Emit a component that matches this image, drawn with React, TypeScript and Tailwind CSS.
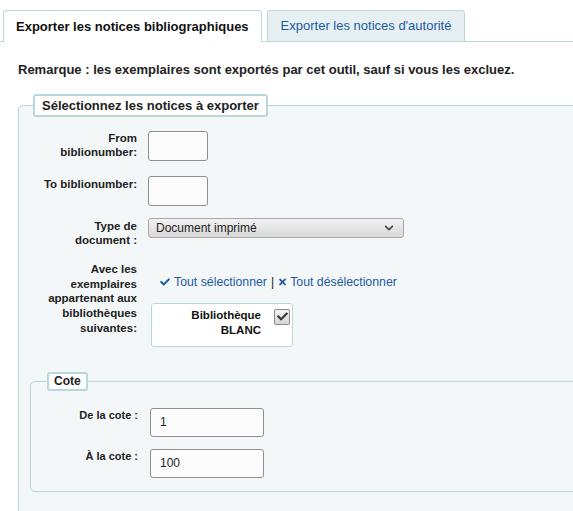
import { FaCheck, FaTimes, FaChevronDown } from 'react-icons/fa'

const labelCls =
  'w-[100px] shrink-0 text-right text-[11.5px] font-bold leading-[14.7px] text-[#222]'

const coteLabelCls =
  'w-[100px] shrink-0 text-right text-[11px] font-bold leading-[14.7px] text-[#222]'

const inputCls =
  'rounded-[3px] border border-[#8f8f8f] bg-[#fcfcfc] px-[9px] text-[12px] text-[#222] outline-none'

export default function App() {
  return (
    <div className="h-[511px] w-full overflow-hidden bg-white font-['Liberation_Sans',Arial,sans-serif]">
      {/* Tabs */}
      <div className="flex items-end border-b border-[#b9d8d9] pl-[3px] pt-[10px]">
        <div className="-mb-px flex h-[32px] items-center rounded-t-[4px] border border-b-0 border-[#b9d8d9] bg-white px-[12px] text-[13px] font-bold text-[#111]">
          Exporter les notices bibliographiques
        </div>
        <div className="ml-[5px] flex h-[31px] items-center rounded-t-[4px] border border-b-0 border-[#b9d8d9] bg-[#e6f0f2] px-[13px] text-[13px] text-[#1e5aa3]">
          Exporter les notices d'autorité
        </div>
      </div>

      <p className="ml-[18px] mt-[18px] text-[13px] font-bold text-[#222]">
        Remarque : les exemplaires sont exportés par cet outil, sauf si vous
        les excluez.
      </p>

      {/* Selection fieldset */}
      <fieldset className="ml-[18px] mt-[14px] w-[600px] rounded-[5px] border border-[#b9d8d9] bg-[#f3f7f8] pb-[40px]">
        <legend className="ml-[14px] rounded-[3px] border-2 border-[#b9d8d9] bg-white px-[7px] text-[13px] font-bold leading-[19px] text-[#222]">
          Sélectionnez les notices à exporter
        </legend>

        <div className="mt-[14px] flex items-start pl-[18px]">
          <div className={labelCls}>
            From
            <br />
            biblionumber:
          </div>
          <input
            readOnly
            className={`ml-[11px] h-[30px] w-[60px] ${inputCls}`}
          />
        </div>

        <div className="mt-[15px] flex items-start pl-[18px]">
          <div className={`${labelCls} pt-[1px]`}>To biblionumber:</div>
          <input
            readOnly
            className={`ml-[11px] h-[30px] w-[60px] ${inputCls}`}
          />
        </div>

        <div className="mt-[12px] flex items-start pl-[18px]">
          <div className={`${labelCls} pt-[1px]`}>
            Type de
            <br />
            document :
          </div>
          <div className="ml-[11px] flex h-[20px] w-[256px] items-center justify-between rounded-[3px] border border-[#a8a8a8] bg-gradient-to-b from-[#f2f2f2] to-[#d9d9d9] pl-[7px] pr-[9px] text-[12px] text-[#222]">
            <span>Document imprimé</span>
            <FaChevronDown className="h-[10px] w-[10px] text-[#444]" />
          </div>
        </div>

        <div className="mt-[14px] flex items-start pl-[18px]">
          <div className={labelCls}>
            Avec les exemplaires appartenant aux bibliothèques suivantes:
          </div>
          <div className="ml-[11px] pt-[13px]">
            <div className="ml-[12px] flex items-center text-[12.3px] leading-[15px] text-[#1e5aa3]">
              <FaCheck className="mr-[4px] h-[10px] w-[10px]" />
              <span>Tout sélectionner</span>
              <span className="mx-[4px] text-[#222]">|</span>
              <FaTimes className="mr-[3px] h-[10px] w-[9px]" />
              <span>Tout désélectionner</span>
            </div>
            <div className="ml-[3px] mt-[13px] flex h-[44px] w-[142px] items-start rounded-[3px] border border-[#b9d8d9] bg-white pt-[4px]">
              <div className="w-[109px] text-right text-[11.5px] font-bold leading-[15px] text-[#111]">
                Bibliothèque
                <br />
                BLANC
              </div>
              <div className="ml-[13px] mt-[1px] flex h-[16px] w-[16px] items-center justify-center rounded-[2px] border border-[#8a8a8a] bg-gradient-to-b from-[#f4f4f4] to-[#d6d6d6]">
                <FaCheck className="h-[11px] w-[11px] text-[#3a3a3a]" />
              </div>
            </div>
          </div>
        </div>

        {/* Cote fieldset */}
        <fieldset className="ml-[11px] mt-[25px] w-[600px] rounded-[5px] border border-[#b9d8d9] pb-[13px]">
          <legend className="ml-[16px] rounded-[3px] border-2 border-[#b9d8d9] bg-white px-[5px] text-[12px] font-bold leading-[15px] text-[#222]">
            Cote
          </legend>

          <div className="mt-[17px] flex items-start pl-[7px]">
            <div className={coteLabelCls}>De la cote :</div>
            <input
              readOnly
              defaultValue="1"
              className={`ml-[12px] h-[29px] w-[114px] ${inputCls}`}
            />
          </div>

          <div className="mt-[12px] flex items-start pl-[7px]">
            <div className={coteLabelCls}>À la cote :</div>
            <input
              readOnly
              defaultValue="100"
              className={`ml-[12px] h-[29px] w-[114px] ${inputCls}`}
            />
          </div>
        </fieldset>
      </fieldset>
    </div>
  )
}
